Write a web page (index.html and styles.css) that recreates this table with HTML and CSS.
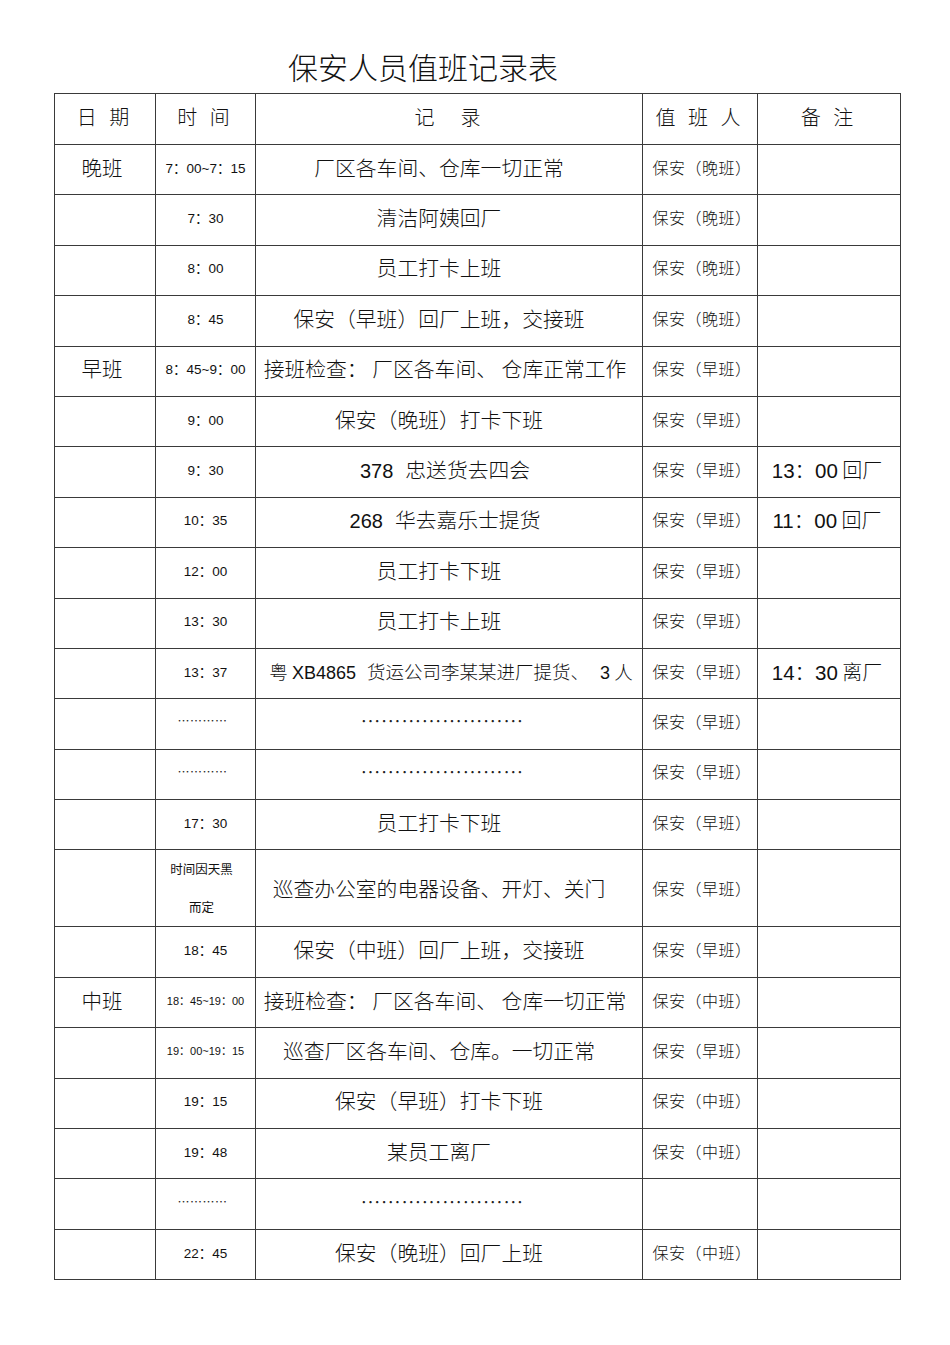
FILE: index.html
```html
<!DOCTYPE html>
<html lang="zh">
<head>
<meta charset="utf-8">
<title>保安人员值班记录表</title>
<link rel="stylesheet" href="styles.css">
</head>
<body>
<div class="page">
  <h1 class="title">保安人员值班记录表</h1>
  <table class="log">
    <colgroup>
      <col class="c-date"><col class="c-time"><col class="c-rec"><col class="c-who"><col class="c-note">
    </colgroup>
    <thead>
      <tr class="head">
        <th>日 期</th><th>时 间</th><th class="wide">记　录</th><th>值 班 人</th><th>备 注</th>
      </tr>
    </thead>
    <tbody>
      <tr><td class="shift">晚班</td><td class="time">7：00~7：15</td><td class="rec">厂区各车间、仓库一切正常</td><td class="who">保安（晚班）</td><td class="note"></td></tr>
      <tr><td class="shift"></td><td class="time">7：30</td><td class="rec">清洁阿姨回厂</td><td class="who">保安（晚班）</td><td class="note"></td></tr>
      <tr><td class="shift"></td><td class="time">8：00</td><td class="rec">员工打卡上班</td><td class="who">保安（晚班）</td><td class="note"></td></tr>
      <tr><td class="shift"></td><td class="time">8：45</td><td class="rec">保安（早班）回厂上班，交接班</td><td class="who">保安（晚班）</td><td class="note"></td></tr>
      <tr><td class="shift">早班</td><td class="time">8：45~9：00</td><td class="rec full">接班检查： 厂区各车间、 仓库正常工作</td><td class="who">保安（早班）</td><td class="note"></td></tr>
      <tr><td class="shift"></td><td class="time">9：00</td><td class="rec">保安（晚班）打卡下班</td><td class="who">保安（早班）</td><td class="note"></td></tr>
      <tr><td class="shift"></td><td class="time">9：30</td><td class="rec full"><span class="num">378</span><span class="gap"></span>忠送货去四会</td><td class="who">保安（早班）</td><td class="note"><span class="num">13：00</span> 回厂</td></tr>
      <tr><td class="shift"></td><td class="time">10：35</td><td class="rec full"><span class="num">268</span><span class="gap"></span>华去嘉乐士提货</td><td class="who">保安（早班）</td><td class="note"><span class="num">11：00</span> 回厂</td></tr>
      <tr><td class="shift"></td><td class="time">12：00</td><td class="rec">员工打卡下班</td><td class="who">保安（早班）</td><td class="note"></td></tr>
      <tr><td class="shift"></td><td class="time">13：30</td><td class="rec">员工打卡上班</td><td class="who">保安（早班）</td><td class="note"></td></tr>
      <tr><td class="shift"></td><td class="time">13：37</td><td class="rec small">粤 <span class="num">XB4865</span><span class="gap"></span>货运公司李某某进厂提货、<span class="gap"></span><span class="num">3</span> 人</td><td class="who">保安（早班）</td><td class="note"><span class="num">14：30</span> 离厂</td></tr>
      <tr><td class="shift"></td><td class="time dots">…………</td><td class="rec dots">……………………</td><td class="who">保安（早班）</td><td class="note"></td></tr>
      <tr><td class="shift"></td><td class="time dots">…………</td><td class="rec dots">……………………</td><td class="who">保安（早班）</td><td class="note"></td></tr>
      <tr><td class="shift"></td><td class="time">17：30</td><td class="rec">员工打卡下班</td><td class="who">保安（早班）</td><td class="note"></td></tr>
      <tr class="tall"><td class="shift"></td><td class="time twoline">时间因天黑<br>而定</td><td class="rec">巡查办公室的电器设备、开灯、关门</td><td class="who">保安（早班）</td><td class="note"></td></tr>
      <tr><td class="shift"></td><td class="time">18：45</td><td class="rec">保安（中班）回厂上班，交接班</td><td class="who">保安（早班）</td><td class="note"></td></tr>
      <tr><td class="shift">中班</td><td class="time long">18：45~19：00</td><td class="rec full">接班检查： 厂区各车间、 仓库一切正常</td><td class="who">保安（中班）</td><td class="note"></td></tr>
      <tr><td class="shift"></td><td class="time long">19：00~19：15</td><td class="rec">巡查厂区各车间、仓库。一切正常</td><td class="who">保安（早班）</td><td class="note"></td></tr>
      <tr><td class="shift"></td><td class="time">19：15</td><td class="rec">保安（早班）打卡下班</td><td class="who">保安（中班）</td><td class="note"></td></tr>
      <tr><td class="shift"></td><td class="time">19：48</td><td class="rec">某员工离厂</td><td class="who">保安（中班）</td><td class="note"></td></tr>
      <tr><td class="shift"></td><td class="time dots">…………</td><td class="rec dots">……………………</td><td class="who"></td><td class="note"></td></tr>
      <tr><td class="shift"></td><td class="time">22：45</td><td class="rec">保安（晚班）回厂上班</td><td class="who">保安（中班）</td><td class="note"></td></tr>
    </tbody>
  </table>
</div>
</body>
</html>
```

FILE: styles.css
```css
html, body {
  margin: 0;
  padding: 0;
  background: #ffffff;
}

body {
  font-family: "Noto Sans CJK SC", "Liberation Sans", sans-serif;
  color: #111;
}

.page {
  padding-left: 54px;
  width: 846px;
}

.title {
  margin: 0;
  padding: 48px 108px 0 0;
  height: 36px;
  margin-bottom: 9px;
  font-size: 30px;
  line-height: 36px;
  font-weight: 300;
  text-align: center;
  letter-spacing: 0;
}

.log {
  border-collapse: collapse;
  table-layout: fixed;
  width: 846px;
}

.c-date { width: 101px; }
.c-time { width: 100px; }
.c-rec { width: 387px; }
.c-who { width: 115px; }
.c-note { width: 143px; }

.log th,
.log td {
  border: 1px solid #3a3a3a;
  padding: 0 0 6px 0;
  text-align: center;
  vertical-align: middle;
  white-space: nowrap;
  overflow: hidden;
}

.head {
  height: 51px;
}

.log th {
  font-size: 20px;
  font-weight: 300;
  letter-spacing: 4px;
}

.log th.wide {
  letter-spacing: 3px;
}

.log tbody tr {
  height: 50.4px;
}

.log tbody tr.tall {
  height: 76px;
}

.log tbody tr.tall td {
  padding-bottom: 0;
}

.log td.shift {
  font-size: 20.5px;
  font-weight: 300;
  padding-right: 6px;
}

.log td.time {
  font-family: "Liberation Sans", "Noto Sans CJK SC", sans-serif;
  font-size: 13.5px;
}

.log td.time.long {
  font-size: 11px;
}

.log td.time.twoline {
  font-family: "Noto Sans CJK SC", sans-serif;
  font-size: 12.5px;
  line-height: 38px;
  padding: 0 8px 0 0;
}

.log td.rec {
  font-size: 20.8px;
  font-weight: 300;
  padding-right: 20px;
}

.log td.rec.full {
  padding-right: 8px;
}

.log td.rec.small {
  font-size: 18.5px;
  padding-right: 0;
  padding-left: 4px;
}

.num {
  font-family: "Liberation Sans", "Noto Sans CJK SC", sans-serif;
  font-size: 20px;
}

.gap {
  display: inline-block;
  width: 12px;
}

.rec.small .num {
  font-size: 18px;
}

.rec.small .gap {
  width: 11px;
}

.log td.who {
  font-size: 16px;
  font-weight: 300;
  letter-spacing: 0.5px;
  padding-left: 4px;
}

.log td.note {
  font-size: 20px;
  font-weight: 300;
  padding-right: 4px;
}

.note .num {
  font-size: 20.5px;
}

.dots {
  color: #222;
}

.log td.time.dots {
  font-family: "Noto Sans CJK SC", sans-serif;
  font-size: 12px;
  letter-spacing: 0.5px;
  padding-right: 6px;
}

.log td.rec.dots {
  font-size: 20px;
  letter-spacing: 0.4px;
  padding-right: 14px;
}
```
